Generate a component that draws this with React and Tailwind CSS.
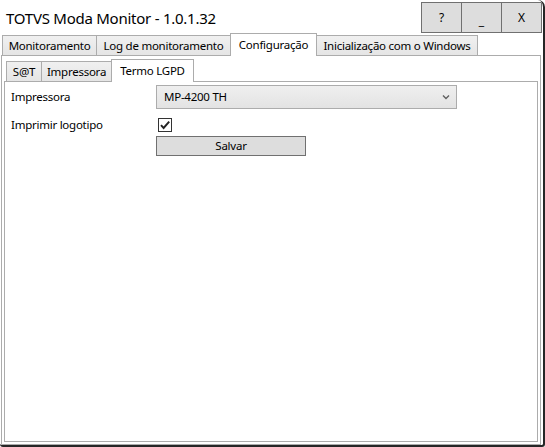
const font = { fontFamily: '"Noto Sans", "Open Sans", sans-serif' }

function TopTab({ label, width, selected }) {
  if (selected) {
    return (
      <div
        className="relative z-10 -ml-px flex h-[23px] items-start justify-center whitespace-nowrap border border-b-0 border-[#acacac] bg-white pt-[2px] text-[11.5px] tracking-[-0.25px] text-black"
        style={{ width }}
      >
        {label}
      </div>
    )
  }
  return (
    <div
      className="-ml-px flex h-[21px] items-center justify-center whitespace-nowrap border border-[#acacac] bg-gradient-to-b from-[#f0f0f0] to-[#e5e5e5] text-[11.5px] tracking-[-0.25px] text-black first:ml-0"
      style={{ width }}
    >
      {label}
    </div>
  )
}

function TitleButton({ children }) {
  return (
    <div className="-ml-px flex h-[31px] w-[41px] items-center justify-center border border-[#707070] bg-[#dddddd] text-[12px] text-black first:ml-0">
      {children}
    </div>
  )
}

export default function App() {
  return (
    <div
      className="h-[447px] w-[545px] overflow-hidden rounded-tr-[7px] rounded-bl-[3px] rounded-br-[3px] border-b-2 border-r-2 border-[#262626] bg-white"
      style={font}
    >
      <div className="flex h-[33px] items-start justify-between">
        <div className="pl-[6px] pt-[6px] text-[15px] leading-[24px] tracking-[-0.25px] text-black">
          TOTVS Moda Monitor - 1.0.1.32
        </div>
        <div className="mr-[1px] mt-[2px] flex">
          <TitleButton>?</TitleButton>
          <TitleButton>
            <span className="mt-[6px]">_</span>
          </TitleButton>
          <TitleButton>X</TitleButton>
        </div>
      </div>

      <div className="flex h-[412px] flex-col">
        <div className="flex h-[23px] items-end pl-[2px]">
          <TopTab label="Monitoramento" width={95} />
          <TopTab label="Log de monitoramento" width={135} />
          <TopTab label="Configuração" width={87} selected />
          <TopTab label="Inicialização com o Windows" width={162} />
        </div>
        <div className="-mt-px ml-px mr-[2px] flex flex-1 flex-col border border-[#acacac] bg-white px-[2px] pb-[2px] pt-[3px]">
          <div className="flex h-[23px] items-end pl-[2px]">
            <TopTab label="S@T" width={36} />
            <TopTab label="Impressora" width={71} />
            <TopTab label="Termo LGPD" width={83} selected />
          </div>
          <div className="-mt-px flex flex-1 flex-col border border-[#acacac] bg-white pl-[6px] pt-[3px] text-[11.5px] tracking-[-0.25px] text-black">
            <div className="flex h-[24px] items-center">
              <div className="w-[145px]">Impressora</div>
              <div className="flex h-[24px] w-[301px] items-center justify-between border border-[#acacac] bg-gradient-to-b from-[#efefef] to-[#e3e3e3] pl-[7px] pr-[6px]">
                <span>MP-4200 TH</span>
                <svg width="8" height="6" viewBox="0 0 8 6">
                  <path d="M1 1.5 L4 4.5 L7 1.5" fill="none" stroke="#606060" strokeWidth="1.4" />
                </svg>
              </div>
            </div>
            <div className="mt-[4px] flex h-[23px] items-center">
              <div className="w-[147px]">Imprimir logotipo</div>
              <div className="flex h-[14px] w-[14px] items-center justify-center border border-[#333333] bg-white">
                <svg width="12" height="12" viewBox="0 0 12 12">
                  <path d="M2 6.2 L4.6 9 L10.2 2.6" fill="none" stroke="#222222" strokeWidth="1.9" />
                </svg>
              </div>
            </div>
            <div className="flex">
              <div className="w-[145px]" />
              <div className="flex h-[20px] w-[150px] items-center justify-center border border-[#707070] bg-[#dddddd]">
                Salvar
              </div>
            </div>
          </div>
        </div>
      </div>
    </div>
  )
}
